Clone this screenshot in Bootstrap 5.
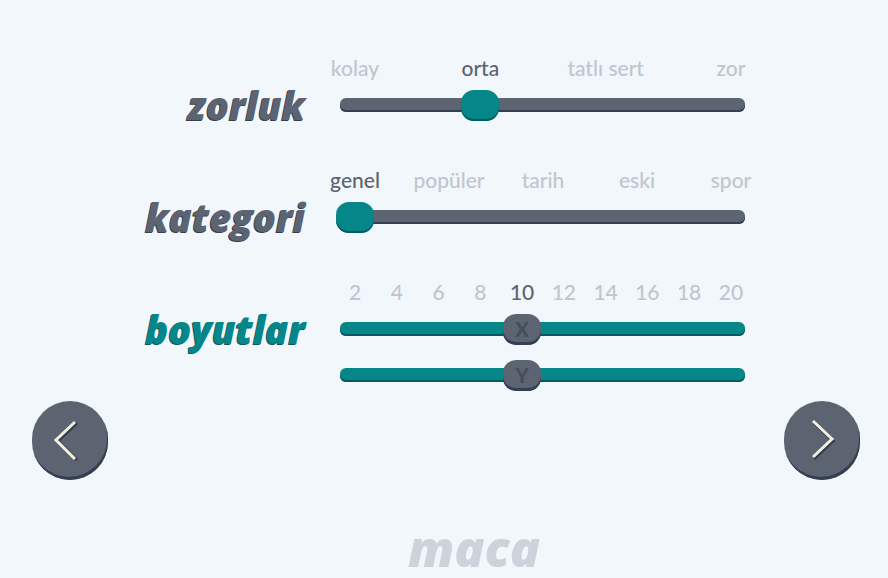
<!DOCTYPE html>
<html lang="tr">
<head>
<meta charset="utf-8">
<meta name="viewport" content="width=device-width, initial-scale=1">
<title>maca</title>
<link href="https://cdn.jsdelivr.net/npm/bootstrap@5.3.0/dist/css/bootstrap.min.css" rel="stylesheet">
<style>
:root{--slate:#5b6470;--slate-dark:#344052;--teal:#058688;--teal-dark:#045a60;--faint:#c1c5cf}
body{background:#f1f7fb;color:var(--slate);font-family:Lato,"Open Sans",sans-serif}
.settings{padding:56px 138px 0 0}
.setting{gap:31px;margin-bottom:38px}
.setting:last-child{margin-bottom:0}
.setting-name{flex:0 0 305px;margin:0;padding-top:24px;font-family:"Open Sans",sans-serif;font-size:38px;line-height:50px;font-weight:800;font-style:italic;color:var(--slate);text-shadow:-1px 1px var(--slate-dark)}
.setting-name.teal{color:var(--teal);text-shadow:-1px 1px var(--teal-dark)}
.control{min-width:0}
.stops{padding:0 19px;height:24px;margin-bottom:9px;font-size:21px;line-height:24px;font-weight:500;color:var(--faint)}
.stops span{width:0;display:flex;justify-content:center;white-space:nowrap}
.stops .on{color:var(--slate)}
.slider{display:grid;align-items:center;height:32px}
.slider+.slider{margin-top:14px}
.slider>*{grid-area:1/1}
.rail{height:14px;margin:0 5px 0 4px;border-radius:6px;background:var(--slate);box-shadow:inset 0 -2px var(--slate-dark)}
.rail.teal{background:var(--teal);box-shadow:inset 0 -2px var(--teal-dark)}
.knob{-webkit-appearance:none;appearance:none;width:100%;height:31px;margin:0;background:none;z-index:1}
.knob::-webkit-slider-thumb{-webkit-appearance:none;width:38px;height:31px;border:0;border-radius:13px;background:var(--teal);box-shadow:inset 0 -2px var(--teal-dark)}
.knob.slate::-webkit-slider-thumb{background:var(--slate);box-shadow:inset 0 -3px var(--slate-dark)}
.axis{z-index:2;pointer-events:none;padding:0 19px;font-size:20px;line-height:28px;font-weight:900;color:#454e5b}
.axis span{display:flex;justify-content:center;width:0}
.pager{padding:10px 28px 0 32px}
.round{width:76px;height:79px;padding:0;border:0;border-radius:38px;background:var(--slate);box-shadow:inset -1px -3px var(--slate-dark)}
.brand-name{padding:38px 0 0 60px;font-family:"Open Sans",sans-serif;font-size:50px;line-height:60px;font-weight:800;font-style:italic;color:#cdd2db}
</style>
</head>
<body>
<main>
<form class="settings">
  <div class="setting d-flex align-items-start">
    <label class="setting-name text-end" for="zorluk">zorluk</label>
    <div class="control flex-grow-1">
      <div class="stops d-flex justify-content-between"><span>kolay</span><span class="on">orta</span><span>tatlı sert</span><span>zor</span></div>
      <div class="slider"><div class="rail"></div><input class="knob" id="zorluk" type="range" min="0" max="3" value="1"></div>
    </div>
  </div>
  <div class="setting d-flex align-items-start">
    <label class="setting-name text-end" for="kategori">kategori</label>
    <div class="control flex-grow-1">
      <div class="stops d-flex justify-content-between"><span class="on">genel</span><span>popüler</span><span>tarih</span><span>eski</span><span>spor</span></div>
      <div class="slider"><div class="rail"></div><input class="knob" id="kategori" type="range" min="0" max="4" value="0"></div>
    </div>
  </div>
  <div class="setting d-flex align-items-start">
    <label class="setting-name teal text-end" for="boyut-x">boyutlar</label>
    <div class="control flex-grow-1">
      <div class="stops d-flex justify-content-between"><span>2</span><span>4</span><span>6</span><span>8</span><span class="on">10</span><span>12</span><span>14</span><span>16</span><span>18</span><span>20</span></div>
      <div class="slider"><div class="rail teal"></div><input class="knob slate" id="boyut-x" type="range" min="2" max="20" step="2" value="10"><div class="axis"><span style="margin-left:44.44%">X</span></div></div>
      <div class="slider"><div class="rail teal"></div><input class="knob slate" id="boyut-y" aria-label="boyutlar Y" type="range" min="2" max="20" step="2" value="10"><div class="axis"><span style="margin-left:44.44%">Y</span></div></div>
    </div>
  </div>
</form>
<nav class="pager d-flex justify-content-between">
  <button class="round d-block" type="button" aria-label="geri"><svg class="d-block" width="76" height="79" fill="none" stroke-width="3"><path d="M43 21 24 39l19 19" stroke="#303b4b" transform="translate(2 1)"/><path d="M43 21 24 39l19 19" stroke="#f3efdf"/></svg></button>
  <button class="round d-block" type="button" aria-label="ileri"><svg class="d-block" width="76" height="79" fill="none" stroke-width="3"><path d="M29 20 48 38 29 56" stroke="#303b4b" transform="translate(1 2)"/><path d="M29 20 48 38 29 56" stroke="#f3efdf"/></svg></button>
</nav>
</main>
<footer class="brand-name text-center">maca</footer>
<script src="https://cdn.jsdelivr.net/npm/bootstrap@5.3.0/dist/js/bootstrap.bundle.min.js"></script>
</body>
</html>
